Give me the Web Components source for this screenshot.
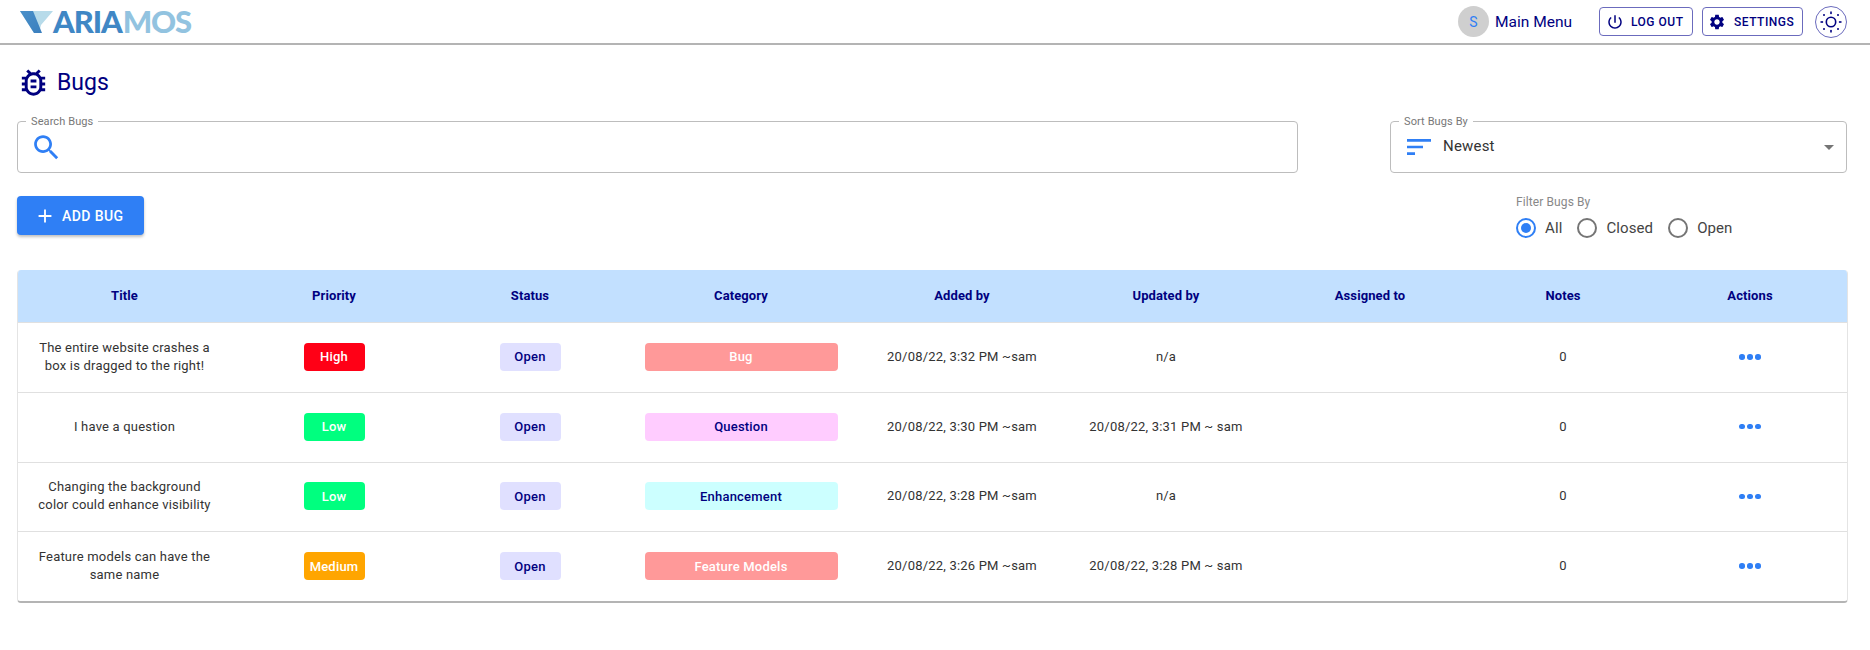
<!DOCTYPE html>
<html lang="en">
<head>
<meta charset="utf-8">
<title>Bugs</title>
<style>
  html, body { margin: 0; background: #fff; }
  body { font-family: Roboto, "Liberation Sans", sans-serif; color: #333; }
</style>
</head>
<body>
<bugs-page></bugs-page>

<script>
const ICONS = {
  bug: '<path d="M20 8h-2.81c-.45-.78-1.07-1.45-1.82-1.96L17 4.41 15.59 3l-2.17 2.17C12.96 5.06 12.49 5 12 5s-.96.06-1.41.17L8.41 3 7 4.41l1.62 1.63C7.88 6.55 7.26 7.22 6.81 8H4v2h2.09c-.05.33-.09.66-.09 1v1H4v2h2v1c0 .34.04.67.09 1H4v2h2.81c1.04 1.79 2.97 3 5.19 3s4.15-1.21 5.19-3H20v-2h-2.09c.05-.33.09-.66.09-1v-1h2v-2h-2v-1c0-.34-.04-.67-.09-1H20V8zm-4 4v3c0 .22-.03.47-.07.7l-.1.65-.37.65c-.72 1.24-2.04 2-3.46 2s-2.74-.77-3.46-2l-.37-.64-.1-.65C8.03 15.47 8 15.22 8 15v-4c0-.23.03-.48.07-.7l.1-.65.37-.65c.3-.52.72-.97 1.21-1.31l.57-.39.74-.18c.31-.08.63-.12.94-.12.32 0 .63.04.95.12l.68.16.61.42c.5.34.91.78 1.21 1.31l.38.65.1.65c.04.22.07.47.07.69v1zm-6 2h4v2h-4zm0-4h4v2h-4z"/>',
  search: '<path d="M15.5 14h-.79l-.28-.27C15.41 12.59 16 11.11 16 9.5 16 5.91 13.09 3 9.5 3S3 5.91 3 9.5 5.91 16 9.5 16c1.61 0 3.09-.59 4.23-1.57l.27.28v.79l5 4.99L20.49 19l-4.99-5zm-6 0C7.01 14 5 11.99 5 9.5S7.01 5 9.5 5 14 7.01 14 9.5 11.99 14 9.5 14z"/>',
  sort: '<path d="M3 18h6v-2H3v2zM3 6v2h18V6H3zm0 7h12v-2H3v2z"/>',
  power: '<path d="M13 3h-2v10h2V3zm4.83 2.17l-1.42 1.42C17.99 7.86 19 9.81 19 12c0 3.87-3.13 7-7 7s-7-3.13-7-7c0-2.19 1.01-4.14 2.58-5.42L6.17 5.17C4.23 6.82 3 9.26 3 12c0 4.97 4.03 9 9 9s9-4.03 9-9c0-2.74-1.23-5.18-3.17-6.83z"/>',
  gear: '<path d="M19.14 12.94c.04-.3.06-.61.06-.94 0-.32-.02-.64-.07-.94l2.03-1.58c.18-.14.23-.41.12-.61l-1.92-3.32c-.12-.22-.37-.29-.59-.22l-2.39.96c-.5-.38-1.03-.7-1.62-.94l-.36-2.54c-.04-.24-.24-.41-.48-.41h-3.84c-.24 0-.43.17-.47.41l-.36 2.54c-.59.24-1.13.57-1.62.94l-2.39-.96c-.22-.08-.47 0-.59.22L2.74 8.87c-.12.21-.08.47.12.61l2.03 1.58c-.05.3-.09.63-.09.94s.02.64.07.94l-2.03 1.58c-.18.14-.23.41-.12.61l1.92 3.32c.12.22.37.29.59.22l2.39-.96c.5.38 1.03.7 1.62.94l.36 2.54c.05.24.24.41.48.41h3.84c.24 0 .44-.17.47-.41l.36-2.54c.59-.24 1.13-.56 1.62-.94l2.39.96c.22.08.47 0 .59-.22l1.92-3.32c.12-.22.07-.47-.12-.61l-2.01-1.58zM12 15.6c-1.98 0-3.6-1.62-3.6-3.6s1.62-3.6 3.6-3.6 3.6 1.62 3.6 3.6-1.62 3.6-3.6 3.6z"/>',
  plus: '<path d="M19 13h-6v6h-2v-6H5v-2h6V5h2v6h6v2z"/>',
  sun: '<path fill-rule="evenodd" d="M12 6.5a5.5 5.5 0 1 0 0 11 5.5 5.5 0 0 0 0-11zm0 1.6a3.9 3.9 0 1 1 0 7.8 3.9 3.9 0 0 1 0-7.8z"/><rect x="11.2" y="1.5" width="1.6" height="2.6"/><rect x="11.2" y="19.9" width="1.6" height="2.6"/><rect x="1.5" y="11.2" width="2.6" height="1.6"/><rect x="19.9" y="11.2" width="2.6" height="1.6"/><circle cx="5" cy="5" r="1"/><circle cx="19" cy="5" r="1"/><circle cx="5" cy="19" r="1"/><circle cx="19" cy="19" r="1"/>'
};

class VmIcon extends HTMLElement {
  connectedCallback() {
    const size = this.getAttribute('size') || 24;
    this.attachShadow({ mode: 'open' }).innerHTML = `
      <style>
        :host { display: inline-flex; flex: none; color: inherit; }
        svg { display: block; fill: currentColor; }
      </style>
      <svg width="${size}" height="${size}" viewBox="0 0 24 24">${ICONS[this.getAttribute('name')]}</svg>`;
  }
}
customElements.define('vm-icon', VmIcon);

class VmLogo extends HTMLElement {
  constructor() {
    super();
    this.attachShadow({ mode: 'open' }).innerHTML = `
      <style>
        :host { display: flex; align-items: center; height: 43px; }
        svg { display: block; flex: none; }
        .word { font: 900 31px/1 Lato, sans-serif; letter-spacing: -1.1px; margin-left: -1px; color: #3f87c5; }
        .word span { color: #92c3e0; margin-left: 1px; }
      </style>
      <svg width="34" height="24" viewBox="0 0 34 24">
        <defs>
          <linearGradient id="arm" x1="0" y1="0" x2="1" y2="1">
            <stop offset="0" stop-color="#4a90c9"/><stop offset="1" stop-color="#3a7fbe"/>
          </linearGradient>
        </defs>
        <polygon points="0,1 33,1 21,15 19,23 14,23" fill="#b7dbea"/>
        <polygon points="0,1 13,1 22,23 14,23" fill="url(#arm)"/>
      </svg>
      <div class="word">ARIA<span>MOS</span></div>`;
  }
}
customElements.define('vm-logo', VmLogo);

class NavButton extends HTMLElement {
  constructor() {
    super();
    this.attachShadow({ mode: 'open' }).innerHTML = `
      <style>
        :host {
          display: inline-flex;
          align-items: center;
          height: 29px;
          box-sizing: border-box;
          border: 1px solid #6b6bbd;
          border-radius: 4px;
          color: #000080;
          font: 500 12px/1 Roboto, sans-serif;
          letter-spacing: 0.5px;
          text-transform: uppercase;
          white-space: nowrap;
        }
      </style>
      <slot></slot>`;
  }
}
customElements.define('nav-button', NavButton);

class AppNavbar extends HTMLElement {
  constructor() {
    super();
    this.attachShadow({ mode: 'open' }).innerHTML = `
      <style>
        :host {
          display: flex;
          align-items: center;
          height: 43px;
          padding: 0 23px 0 20px;
          border-bottom: 2px solid #b4b4b4;
          background: #fff;
        }
        .right { margin-left: auto; display: flex; align-items: center; }
        .avatar {
          width: 31px; height: 31px; border-radius: 50%;
          background: #cfcfcf; color: #2f7ff5;
          display: flex; align-items: center; justify-content: center;
          font: 400 14px Roboto, sans-serif;
        }
        .menu { margin: 0 27px 0 6px; color: #000080; font: 400 15.5px Roboto, sans-serif; }
        .logout { padding: 0 0 0 6px; gap: 7px; margin-right: 9px; width: 94px; box-sizing: border-box; }
        .settings { padding: 0 0 0 5px; gap: 8px; margin-right: 12px; width: 101px; box-sizing: border-box; }
        .theme {
          width: 32px; height: 32px; box-sizing: border-box;
          border: 1px solid #6b6bbd; border-radius: 50%;
          display: flex; align-items: center; justify-content: center;
          color: #000080;
        }
      </style>
      <vm-logo></vm-logo>
      <div class="right">
        <div class="avatar">S</div>
        <div class="menu">Main Menu</div>
        <nav-button class="logout"><vm-icon name="power" size="18"></vm-icon>Log out</nav-button>
        <nav-button class="settings"><vm-icon name="gear" size="18"></vm-icon>Settings</nav-button>
        <div class="theme"><vm-icon name="sun" size="24"></vm-icon></div>
      </div>`;
  }
}
customElements.define('app-navbar', AppNavbar);

class OutlineField extends HTMLElement {
  constructor() {
    super();
    this.attachShadow({ mode: 'open' }).innerHTML = `
      <style>
        :host {
          display: flex;
          align-items: center;
          position: relative;
          height: 52px;
          box-sizing: border-box;
          border: 1px solid #bdbdbd;
          border-radius: 4px;
          padding-left: 12px;
        }
        .legend {
          position: absolute;
          left: 8px; top: -7px;
          padding: 0 5px;
          background: #fff;
          color: #777;
          font: 400 11px/13px Roboto, sans-serif;
          letter-spacing: 0.1px;
        }
      </style>
      <div class="legend"></div>
      <slot></slot>`;
  }
  connectedCallback() {
    this.shadowRoot.querySelector('.legend').textContent = this.getAttribute('label');
  }
}
customElements.define('outline-field', OutlineField);

class RadioOption extends HTMLElement {
  constructor() {
    super();
    this.attachShadow({ mode: 'open' }).innerHTML = `
      <style>
        :host { display: inline-flex; align-items: center; gap: 9px; color: #444; font: 400 15px/20px Roboto, sans-serif; letter-spacing: 0.1px; }
        .dot {
          width: 20px; height: 20px; box-sizing: border-box;
          border: 2px solid #757575; border-radius: 50%;
          display: flex; align-items: center; justify-content: center;
        }
        :host([checked]) .dot { border-color: #2f7ff5; }
        :host([checked]) .dot::after { content: ""; width: 10px; height: 10px; border-radius: 50%; background: #2f7ff5; }
      </style>
      <span class="dot"></span><slot></slot>`;
  }
}
customElements.define('radio-option', RadioOption);

class TagPill extends HTMLElement {
  constructor() {
    super();
    this.attachShadow({ mode: 'open' }).innerHTML = `
      <style>
        :host {
          display: inline-flex;
          align-items: center;
          justify-content: center;
          height: 28px;
          width: 61px;
          border-radius: 4px;
          background: var(--pill-bg, #e0e0ff);
          color: var(--pill-fg, #000080);
          font: 500 13px/1 Roboto, sans-serif;
          letter-spacing: 0.2px;
          white-space: nowrap;
        }
        :host([wide]) { width: 193px; }
      </style>
      <slot></slot>`;
  }
}
customElements.define('tag-pill', TagPill);

const COLUMNS = '213px 206px 186px 236px 206px 202px 206px 180px 1fr';

class BugRow extends HTMLElement {
  constructor() {
    super();
    this.attachShadow({ mode: 'open' }).innerHTML = `
      <style>
        :host {
          display: grid;
          grid-template-columns: ${COLUMNS};
          align-items: center;
          justify-items: center;
          height: 69.75px;
          box-sizing: border-box;
          border-top: 1px solid #e0e0e0;
          padding-bottom: 1px;
          color: #333;
          font: 400 13px/18px Roboto, sans-serif;
          letter-spacing: 0.2px;
          text-align: center;
        }
        .title { padding: 0 18px; }
        .dots { display: flex; gap: 2.5px; }
        .dots i { width: 5.5px; height: 5.5px; border-radius: 50%; background: #2f7ff5; }
      </style>
      <div class="title"></div>
      <tag-pill class="priority"></tag-pill>
      <tag-pill class="status"></tag-pill>
      <tag-pill wide class="category"></tag-pill>
      <div class="added"></div>
      <div class="updated"></div>
      <div class="assigned"></div>
      <div class="notes"></div>
      <div class="dots"><i></i><i></i><i></i></div>`;
  }
  set bug(b) {
    const q = s => this.shadowRoot.querySelector(s);
    q('.title').textContent = b.title;
    q('.priority').textContent = b.priority;
    q('.priority').style.setProperty('--pill-bg', b.priorityBg);
    q('.priority').style.setProperty('--pill-fg', '#fff');
    q('.status').textContent = b.status;
    q('.category').textContent = b.category;
    q('.category').style.setProperty('--pill-bg', b.categoryBg);
    q('.category').style.setProperty('--pill-fg', b.categoryFg);
    q('.added').textContent = b.added;
    q('.updated').textContent = b.updated;
    q('.assigned').textContent = b.assigned;
    q('.notes').textContent = b.notes;
  }
}
customElements.define('bug-row', BugRow);

const BUGS = [
  { title: 'The entire website crashes a box is dragged to the right!', priority: 'High', priorityBg: '#ff0016', status: 'Open', category: 'Bug', categoryBg: '#ff9999', categoryFg: '#fff', added: '20/08/22, 3:32 PM ~sam', updated: 'n/a', assigned: '', notes: '0' },
  { title: 'I have a question', priority: 'Low', priorityBg: '#00ff7f', status: 'Open', category: 'Question', categoryBg: '#ffccff', categoryFg: '#000080', added: '20/08/22, 3:30 PM ~sam', updated: '20/08/22, 3:31 PM ~ sam', assigned: '', notes: '0' },
  { title: 'Changing the background color could enhance visibility', priority: 'Low', priorityBg: '#00ff7f', status: 'Open', category: 'Enhancement', categoryBg: '#ccffff', categoryFg: '#000080', added: '20/08/22, 3:28 PM ~sam', updated: 'n/a', assigned: '', notes: '0' },
  { title: 'Feature models can have the same name', priority: 'Medium', priorityBg: '#ffa500', status: 'Open', category: 'Feature Models', categoryBg: '#ff9999', categoryFg: '#fff', added: '20/08/22, 3:26 PM ~sam', updated: '20/08/22, 3:28 PM ~ sam', assigned: '', notes: '0' }
];

class BugTable extends HTMLElement {
  constructor() {
    super();
    const heads = ['Title', 'Priority', 'Status', 'Category', 'Added by', 'Updated by', 'Assigned to', 'Notes', 'Actions'];
    this.attachShadow({ mode: 'open' }).innerHTML = `
      <style>
        :host {
          display: block;
          box-sizing: border-box;
          border: 1px solid #e4e4e4;
          border-top: 0;
          border-bottom: 2px solid #b4b4b4;
          border-radius: 4px;
          overflow: hidden;
        }
        .head {
          display: grid;
          grid-template-columns: ${COLUMNS};
          align-items: center;
          justify-items: center;
          box-sizing: border-box;
          height: 52px;
          padding-bottom: 2px;
          background: #c2e0ff;
          color: #000080;
          font: 700 13px/1 Roboto, sans-serif;
          letter-spacing: 0.1px;
        }
      </style>
      <div class="head">${heads.map(h => `<div>${h}</div>`).join('')}</div>
      <div class="rows"></div>`;
    const rows = this.shadowRoot.querySelector('.rows');
    BUGS.forEach(b => {
      const row = document.createElement('bug-row');
      row.bug = b;
      rows.appendChild(row);
    });
  }
}
customElements.define('bug-table', BugTable);

class BugsPage extends HTMLElement {
  constructor() {
    super();
    this.attachShadow({ mode: 'open' }).innerHTML = `
      <style>
        :host { display: block; }
        main { padding: 0 22px 0 17px; }
        .heading { display: flex; align-items: center; gap: 6px; height: 40px; margin-top: 17px; color: #000080; }
        .heading vm-icon { margin-left: -1px; }
        h1 { margin: 0; font: 400 23px/1 Roboto, sans-serif; }
        .search-row { display: flex; justify-content: space-between; margin-top: 19px; padding-right: 1px; }
        .search { width: 1281px; color: #2f7ff5; }
        .sort { width: 457px; color: #2f7ff5; }
        .newest { margin: 0 0 2px 8px; color: #333; font: 400 15px Roboto, sans-serif; letter-spacing: 0.2px; }
        .caret { margin-left: auto; margin-right: 12px; width: 0; height: 0; border: 5px solid transparent; border-top-color: #757575; border-bottom: 0; }
        .action-row { display: flex; justify-content: space-between; margin-top: 23px; height: 74px; }
        .add {
          display: flex; align-items: center; gap: 6px;
          box-sizing: border-box; width: 127px; height: 39px; padding-left: 17px;
          background: #2f7ff5; color: #fff; border-radius: 4px;
          font: 500 14px/1 Roboto, sans-serif; letter-spacing: 0.4px;
          box-shadow: 0 2px 3px rgba(0,0,0,.25);
        }
        .filter { width: 332px; }
        .filter-label { color: #888; font: 400 12px/14px Roboto, sans-serif; letter-spacing: 0.1px; margin-top: -1px; }
        .radios { display: flex; gap: 15px; margin-top: 9px; margin-left: 0; }
      </style>
      <app-navbar></app-navbar>
      <main>
        <div class="heading"><vm-icon name="bug" size="35"></vm-icon><h1>Bugs</h1></div>
        <div class="search-row">
          <outline-field class="search" label="Search Bugs"><vm-icon name="search" size="33"></vm-icon></outline-field>
          <outline-field class="sort" label="Sort Bugs By">
            <vm-icon name="sort" size="32"></vm-icon>
            <span class="newest">Newest</span>
            <span class="caret"></span>
          </outline-field>
        </div>
        <div class="action-row">
          <div class="add"><vm-icon name="plus" size="22"></vm-icon>ADD BUG</div>
          <div class="filter">
            <div class="filter-label">Filter Bugs By</div>
            <div class="radios">
              <radio-option checked>All</radio-option>
              <radio-option>Closed</radio-option>
              <radio-option>Open</radio-option>
            </div>
          </div>
        </div>
        <bug-table></bug-table>
      </main>`;
  }
}
customElements.define('bugs-page', BugsPage);
</script>
</body>
</html>
